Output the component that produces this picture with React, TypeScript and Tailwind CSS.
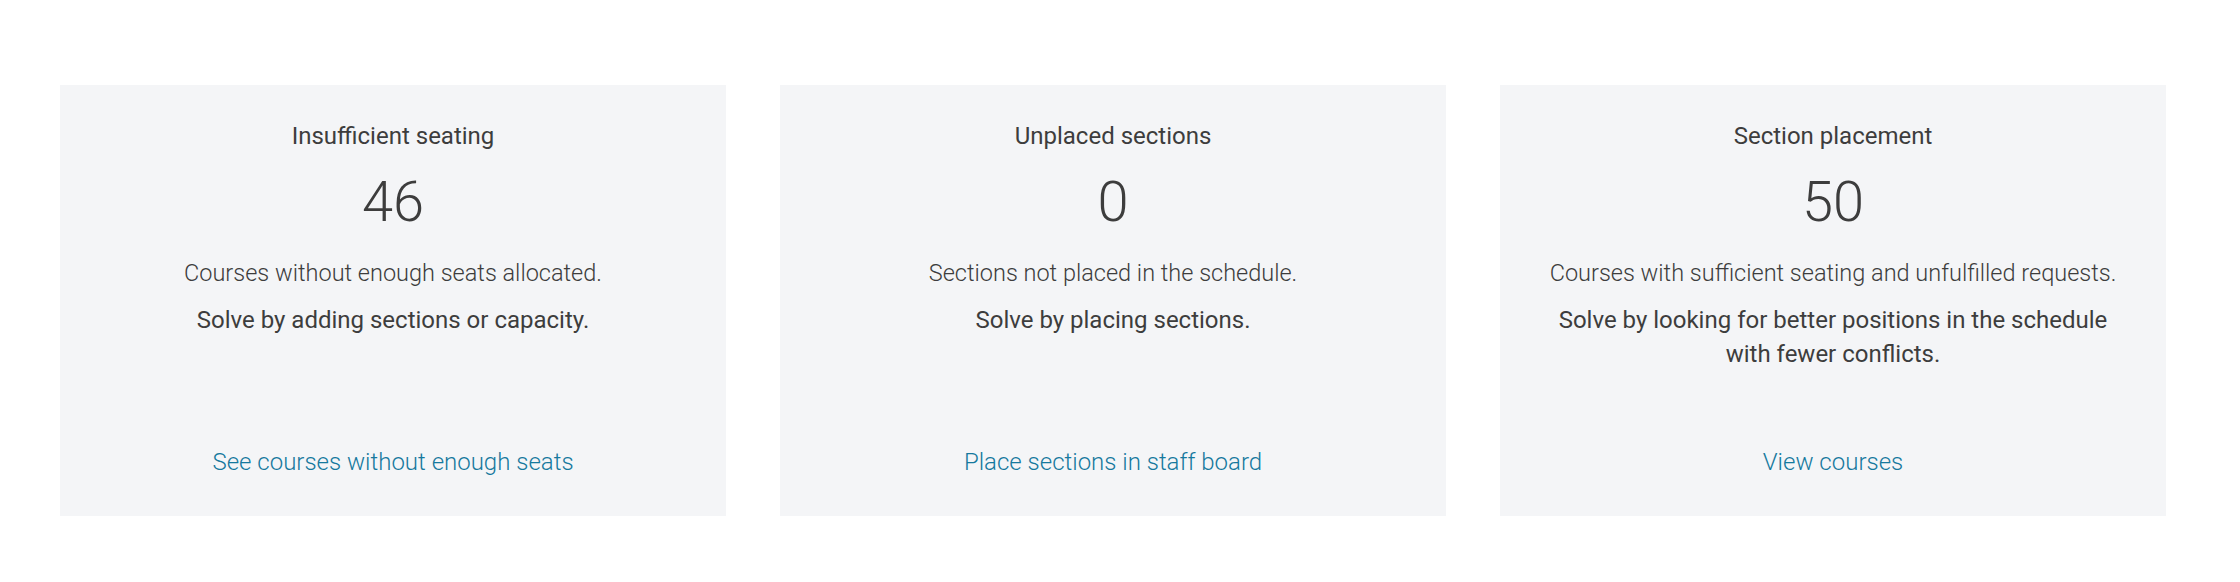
const cards = [
  {
    title: "Insufficient seating",
    count: 46,
    description: "Courses without enough seats allocated.",
    solve: "Solve by adding sections or capacity.",
    link: "See courses without enough seats",
  },
  {
    title: "Unplaced sections",
    count: 0,
    description: "Sections not placed in the schedule.",
    solve: "Solve by placing sections.",
    link: "Place sections in staff board",
  },
  {
    title: "Section placement",
    count: 50,
    description: "Courses with sufficient seating and unfulfilled requests.",
    solve: "Solve by looking for better positions in the schedule with fewer conflicts.",
    link: "View courses",
  },
]

export default function App() {
  return (
    <div className="min-h-[582px] bg-white pt-[85px] pl-[60px] font-['Roboto',sans-serif] text-[#3d3d3d]">
      <div className="flex gap-[54px]">
        {cards.map((card) => (
          <div
            key={card.title}
            className="flex h-[431px] w-[666px] flex-col items-center bg-[#f4f5f7] px-6 pt-[35px] pb-[38px] text-center"
          >
            <h2 className="text-[24px] leading-[32px] font-normal">{card.title}</h2>
            <div className="mt-[22px] text-[56px] leading-[56px] font-light">{card.count}</div>
            <p className="mt-[27px] text-[23.5px] leading-[32px] font-light">{card.description}</p>
            <p className="mt-[14px] max-w-[565px] text-[24px] leading-[34px] font-normal">{card.solve}</p>
            <a href="#" className="mt-auto text-[24px] leading-[32px] font-light text-[#16799e]">
              {card.link}
            </a>
          </div>
        ))}
      </div>
    </div>
  )
}
